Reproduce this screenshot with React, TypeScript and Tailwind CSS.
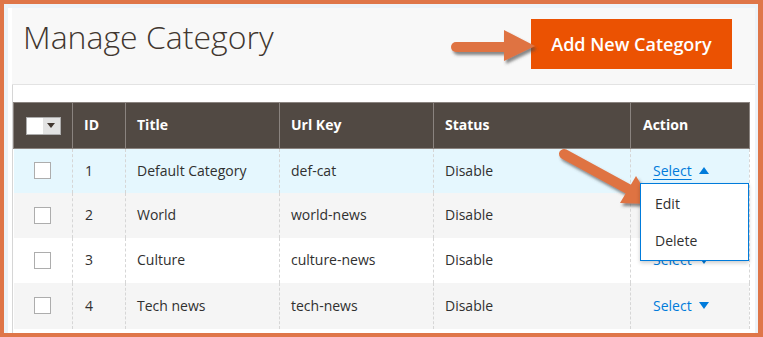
import React from 'react';

type Row = { id: number; title: string; url: string; status: string };

const rows: Row[] = [
  { id: 1, title: 'Default Category', url: 'def-cat', status: 'Disable' },
  { id: 2, title: 'World', url: 'world-news', status: 'Disable' },
  { id: 3, title: 'Culture', url: 'culture-news', status: 'Disable' },
  { id: 4, title: 'Tech news', url: 'tech-news', status: 'Disable' },
];

const rowBg = ['bg-[#e5f7fe]', 'bg-[#f5f5f5]', 'bg-white', 'bg-[#f5f5f5]'];
const rowH = ['h-[44px]', 'h-[45px]', 'h-[45px]', 'h-[46px]'];

function Checkbox() {
  return <span className="block w-[17px] h-[17px] border border-[#adadad] bg-white mx-auto" />;
}

function Arrows() {
  return (
    <svg className="absolute left-0 top-0 pointer-events-none" width="763" height="337" viewBox="0 0 763 337">
      <defs>
        <filter id="shadow" x="-20%" y="-20%" width="140%" height="140%">
          <feDropShadow dx="2" dy="3" stdDeviation="1.6" floodColor="#4a4a4a" floodOpacity="0.65" />
        </filter>
      </defs>
      <g filter="url(#shadow)" fill="#df7343" stroke="none">
        <line x1="452" y1="43" x2="504" y2="43" stroke="#df7343" strokeWidth="10" strokeLinecap="round" />
        <polygon points="500,26 531,42 500,57" />
        <line x1="560" y1="150" x2="626" y2="186" stroke="#df7343" strokeWidth="10" strokeLinecap="round" />
        <polygon points="616,199 632,172 649,200" />
      </g>
    </svg>
  );
}

export default function App() {
  return (
    <div
      className="relative w-[763px] h-[337px] overflow-hidden bg-[#edf3f9] border-[#df7649] border-t-4 border-l-4 border-b-4 border-r-[5px] pt-[4px] pl-[4px] pr-[3px]"
      style={{ fontFamily: '"Open Sans", "Liberation Sans", sans-serif' }}
    >
      <div className="h-full flex flex-col border-l-4 border-white">
        <div className="h-[77px] shrink-0 bg-[#f8f8f8] border-b border-[#e3e3e3] flex items-start justify-between pl-[11px] pr-[23px]">
          <h1 className="mt-[9px] text-[32px] leading-[40px] font-light text-[#41362f]">Manage Category</h1>
          <button
            type="button"
            className="mt-[11px] w-[201px] h-[50px] bg-[#eb5202] text-white text-[18px] font-semibold"
          >
            Add New Category
          </button>
        </div>
        <div className="flex-1 bg-white pt-[17px] pr-[6px] border-l border-[#d6d6d6]">
          <table className="table-fixed border-collapse w-[736px] text-[14px] text-[#303030]">
            <colgroup>
              <col className="w-[59px]" />
              <col className="w-[53px]" />
              <col className="w-[154px]" />
              <col className="w-[154px]" />
              <col className="w-[197px]" />
              <col className="w-[119px]" />
            </colgroup>
            <thead>
              <tr className="h-[46px] bg-[#514943] text-white font-bold text-left">
                <th className="border border-[#8a837f] p-0">
                  <div className="flex w-[35px] h-[18px] mx-auto border border-[#adadad]">
                    <span className="w-[16px] bg-white" />
                    <span className="flex-1 bg-[#e3e3e3] flex items-center justify-center">
                      <span className="w-0 h-0 border-l-[4px] border-r-[4px] border-t-[5px] border-l-transparent border-r-transparent border-t-[#41362f]" />
                    </span>
                  </div>
                </th>
                <th className="border border-[#8a837f] pl-[11px] pb-[3px] font-bold">ID</th>
                <th className="border border-[#8a837f] pl-[11px] pb-[3px] font-bold">Title</th>
                <th className="border border-[#8a837f] pl-[11px] pb-[3px] font-bold">Url Key</th>
                <th className="border border-[#8a837f] pl-[11px] pb-[3px] font-bold">Status</th>
                <th className="border border-[#8a837f] pl-[12px] pb-[3px] font-bold">Action</th>
              </tr>
            </thead>
            <tbody>
              {rows.map((r, i) => (
                <tr key={r.id} className={`${rowBg[i]} ${rowH[i]}`}>
                  <td className="p-0">
                    <Checkbox />
                  </td>
                  <td className="pl-[12px] pb-[1px] border-l border-dashed border-[#d6d6d6]">{r.id}</td>
                  <td className="pl-[11px] pb-[1px] border-l border-dashed border-[#d6d6d6]">{r.title}</td>
                  <td className="pl-[11px] pb-[1px] border-l border-dashed border-[#d6d6d6]">{r.url}</td>
                  <td className="pl-[11px] pb-[1px] border-l border-dashed border-[#d6d6d6]">{r.status}</td>
                  <td className="relative pl-[22px] pb-[1px] border-l border-r border-dashed border-[#d6d6d6]">
                    <span className={`text-[#007bdb] ${i === 0 ? 'underline underline-offset-[3px]' : ''}`}>Select</span>
                    {i === 0 ? (
                      <span className="inline-block align-middle ml-[7px] mb-[3px] w-0 h-0 border-l-[5px] border-r-[5px] border-b-[7px] border-l-transparent border-r-transparent border-b-[#007bdb]" />
                    ) : (
                      <span className="inline-block align-middle ml-[7px] mb-[2px] w-0 h-0 border-l-[5px] border-r-[5px] border-t-[7px] border-l-transparent border-r-transparent border-t-[#007bdb]" />
                    )}
                    {i === 0 && (
                      <div className="absolute z-10 left-[9px] top-[34px] w-[109px] h-[78px] bg-white border border-[#007bdb] shadow-[0_2px_4px_rgba(0,0,0,0.2)] flex flex-col">
                        <div className="h-[39px] pl-[14px] pt-[9px] text-[#303030]">Edit</div>
                        <div className="h-[39px] pl-[14px] pt-[8px] text-[#303030]">Delete</div>
                      </div>
                    )}
                  </td>
                </tr>
              ))}
            </tbody>
          </table>
        </div>
      </div>
      <Arrows />
    </div>
  );
}
